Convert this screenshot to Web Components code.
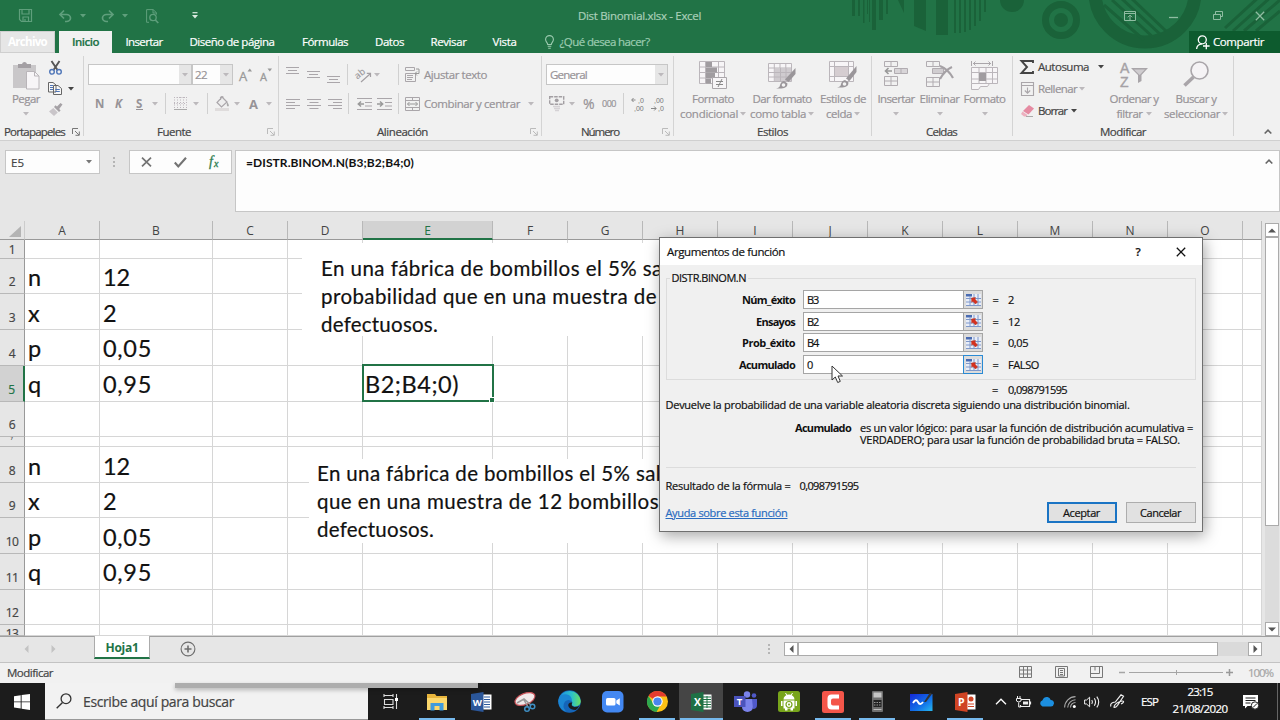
<!DOCTYPE html>
<html lang="es">
<head>
<meta charset="utf-8">
<title>Dist Binomial.xlsx - Excel</title>
<style>
  body {
    margin: 0;
    overflow: hidden;
    font-family: "Open Sans", "Noto Sans", sans-serif;
    font-size: 11.5px;
    color: #444;
  }
</style>
</head>
<body>
<excel-app></excel-app>

<script>
"use strict";

(() => {
  // name: [width, height, svg markup]
  const icons = {
    arrow: [6, 4, `<path d="M0 0h6L3 3.6z" fill="currentColor"/>`],
    arrowOff: [6, 4, `<path d="M0 0h6L3 3.6z" fill="#bcb9bc"/>`],
    sep: [1, 21, `<path d="M.5 0v21" stroke="#d0d0d0"/>`],
    launcher: [8, 8, `<path d="M.5 6V.5H6M3 3l4 4M7.3 3.5v3.8H3.5" fill="none" stroke="currentColor"/>`],
    chevronUp: [8, 5, `<path d="M.7 4.5L4 1.2l3.3 3.3" fill="none" stroke="currentColor" stroke-width="1.6"/>`],
    save: [13, 13, `<path d="M.5.5h12v12H2.5l-2-2zM3 .5v4.500h7V.5M4 12.500V8h5.500v4.500M6 10v2" fill="none" stroke="currentColor" stroke-width="1.200"/>`],
    undo: [13, 12, `<path d="M5 .5L1 4.500l4 4M1.500 4.500h6a4 3.500 0 0 1 0 7H6" fill="none" stroke="currentColor" stroke-width="1.700"/>`],
    redo: [13, 12, `<path d="M8 .5l4 4-4 4M11.500 4.500h-6a4 3.500 0 0 0 0 7H7" fill="none" stroke="currentColor" stroke-width="1.700"/>`],
    preview: [13, 14, `<path d="M3 13.300H.6V.6h6.500l3.300 3v2M7 .6V4h3.400" fill="none" stroke="currentColor"/><circle cx="7" cy="8.500" r="3.200" fill="none" stroke="currentColor" stroke-width="1.300"/><path d="M9.300 11l3 3" stroke="currentColor" stroke-width="1.700"/>`],
    customize: [6, 7, `<path d="M.5.7h5" stroke="currentColor" stroke-width="1.200"/><path d="M0 3h6L3 6.500z" fill="currentColor"/>`],
    display: [12, 10, `<path d="M.5.500h11v9H.5zM.5 2.500h11M6 9V4.300M3.800 6.300L6 4.100l2.200 2.200" fill="none" stroke="currentColor"/>`],
    minimize: [9, 10, `<path d="M0 6.500h9" stroke="currentColor" stroke-width="1.300"/>`],
    restore: [10, 9, `<path d="M.5 3.500h7v5h-7zM2.500 3V.5h7v5H8" fill="none" stroke="currentColor"/>`],
    close: [10, 10, `<path d="M.8.8l8.400 8.400M9.200.8L.8 9.200" stroke="currentColor" stroke-width="1.300"/>`],
    bulb: [9, 14, `<path d="M2.700 9.500C2.700 7.500.6 7 .6 4.500a3.900 3.900 0 0 1 7.800 0c0 2.500-2.100 3-2.100 5zM2.700 11.300h3.600M3.200 13.200h2.600" fill="none" stroke="currentColor" stroke-width="1.100"/>`],
    share: [14, 15, `<circle cx="6.300" cy="4.800" r="4" fill="none" stroke="currentColor" stroke-width="1.300"/><path d="M.6 14C.8 10.500 3 9 6 8.800M10.300 7.700v6.600M7 11h6.600" fill="none" stroke="currentColor" stroke-width="1.300"/>`],
    paste: [27, 29, `<path d="M0 4h23v23H0z" fill="#c9c7c9"/><path d="M5 3h4a2.600 2.600 0 0 1 5 0h4v4H5z" fill="#a39fa3"/><path d="M13.500 10.500h8l4.500 4.500v13H13.500z" fill="#f7f5f7" stroke="#b9b5b9"/><path d="M21.500 10.500V15H26" fill="none" stroke="#b9b5b9"/>`],
    cut: [13, 14, `<path d="M2.500 0l6 9M10.500 0l-6 9" stroke="#555" stroke-width="1.900"/><circle cx="3" cy="10.800" r="2.300" fill="none" stroke="#4f76b8" stroke-width="1.400"/><circle cx="10" cy="10.800" r="2.300" fill="none" stroke="#4f76b8" stroke-width="1.400"/>`],
    copy: [14, 13, `<path d="M.5.500H5L8 3v7H.5zM5.500 3.500H10l3.500 3v6h-8z" fill="#f7f7f7" stroke="#666"/><path d="M2 3.500h3M2 5.500h3M2 7.500h3M7.300 7.500h4.500M7.300 9.500h4.500" stroke="#4f76b8"/>`],
    brush: [14, 13, `<path d="M13.500 1.500L11.500 0 8 3.500 6.500 2.300 5 4l5 5 1.600-1.500L10.200 6z" fill="#a5a1a5"/><path d="M4.300 5l4.500 4.600L5 13 0 8.500z" fill="#c9c5c9"/>`],
    grow: [13, 14, `<text x="0" y="13" font-size="13" fill="#999" stroke="#999" stroke-width=".3">A</text><path d="M8.500 3.500h4.500L10.800.5z" fill="#999"/>`],
    shrink: [12, 14, `<text x="0" y="13" font-size="11" fill="#999" stroke="#999" stroke-width=".3">A</text><path d="M7.500.5H12L9.800 3.500z" fill="#999"/>`],
    borders: [13, 13, `<path d="M.5 0v12M3.500 0v12M6.500 0v12M9.500 0v12M12.500 0v12M0 .5h12M0 6.500h12" stroke="#bdb6bd" stroke-dasharray="1 1.500"/><path d="M0 12.500h13" stroke="#aaa"/>`],
    bucket: [15, 15, `<path d="M7 1l5 5-5.500 5L2 6.500zM5.500 4V1.500q1.500-2 3 0" fill="#eee" stroke="#aaa6aa" stroke-width="1.200"/><path d="M12 6q3 3.500 1.200 4.500-2 0-1.200-4.500" fill="#aaa"/><path d="M0 12h14v3H0z" fill="#dfdcdc"/>`],
    alignTop: [13, 18, `<path d="M0 1.500h13M2 4.500h9M0 7.500h13" stroke="#aaa6aa"/>`],
    alignMid: [13, 18, `<path d="M0 5.500h13M2 8.500h9M0 11.500h13" stroke="#aaa6aa"/>`],
    alignBottom: [13, 18, `<path d="M0 10.500h13M2 13.500h9M0 16.500h13" stroke="#aaa6aa"/>`],
    alignLeft: [14, 12, `<path d="M0 1.500h14M0 4.500h9M0 7.500h14M0 10.500h9" stroke="#aaa6aa"/>`],
    alignCenter: [14, 12, `<path d="M0 1.500h14M2.500 4.500h9M0 7.500h14M2.500 10.500h9" stroke="#aaa6aa"/>`],
    alignRight: [14, 12, `<path d="M0 1.500h14M5 4.500h9M0 7.500h14M5 10.500h9" stroke="#aaa6aa"/>`],
    orient: [16, 16, `<text x="0" y="9" font-size="9.500" font-weight="600" fill="#a39fa3" transform="rotate(-38 6 9)">ab</text><path d="M5 15l9-8M10.800 6.300h3.700V10" fill="none" stroke="#a39fa3" stroke-width="1.200"/>`],
    outdent: [15, 12, `<path d="M0 .5h15M0 11.500h15M8 4.500h7M8 8h7" stroke="#aaa6aa"/><path d="M7 6H1.500M4 3.500L1.300 6 4 8.500" fill="none" stroke="#999" stroke-width="1.500"/>`],
    indent: [15, 12, `<path d="M0 .5h15M0 11.500h15M8 4.500h7M8 8h7" stroke="#aaa6aa"/><path d="M0 6h5.500M3 3.500L5.700 6 3 8.500" fill="none" stroke="#999" stroke-width="1.500"/>`],
    wrap: [15, 15, `<path d="M.5.500h9v3h-9zM.5 6.500h10v8h-10zM2 8.500h6M2 10.500h6M2 12.500h5" fill="none" stroke="#aaa6aa"/><path d="M11 2h3v4.500h-4M12 4.500l-2 2 2 2" fill="none" stroke="#999"/>`],
    merge: [15, 14, `<path d="M.5.500h14v13H.5zM.5 3.500h14M.5 10.500h14M7.500 0v3M7.500 11v3" fill="none" stroke="#aaa6aa"/><path d="M2.500 7h10M4.500 5l-2 2 2 2M10.500 5l2 2-2 2" fill="none" stroke="#999"/>`],
    money: [16, 15, `<path d="M.7.700h14v7.500H.7z" fill="none" stroke="#a39fa3" stroke-width="1.400" stroke-dasharray="3.500 1"/><circle cx="7.700" cy="4.300" r="1.900" fill="#a39fa3"/><path d="M4 10.500h7M5 12.500h6M6 14.500h4" stroke="#d5d2d5" stroke-width="1.500"/>`],
    moreDec: [14, 14, `<path d="M4.500 3H.8M2.500 1L.7 3l1.800 2" fill="none" stroke="#888"/><text x="7" y="5.500" font-size="7" font-family="Liberation Sans" fill="#777">,0</text><text x="3" y="14" font-size="7" font-family="Liberation Sans" fill="#777">,00</text>`],
    lessDec: [14, 14, `<text x="3" y="5.500" font-size="7" font-family="Liberation Sans" fill="#777">,00</text><path d="M0 11.500h5M3.200 9.500l1.900 2-1.900 2" fill="none" stroke="#888"/><text x="7" y="14" font-size="7" font-family="Liberation Sans" fill="#777">,0</text>`],
    condFormat: [28, 28, `<path d="M.5.500h25v22H.5zM6.500 0v23M19.500 0v23M.5 6h25M.5 11.500h25M.5 17h25" fill="#f7f5f7" stroke="#bbb6bb"/><path d="M7 1h6v5H7zM7 6.500h11v5H7zM7 12h9v5H7zM7 17.500h5v5H7z" fill="#a09ca0"/><path d="M13.500 16.500h14v11h-14z" fill="#f7f5f7" stroke="#aaa6aa"/><path d="M17 20.500h7M17 23.500h7M23 18l-4 8" stroke="#888"/>`],
    tableFormat: [28, 28, `<path d="M.5 2.500h23v18H.5zM6.300 2.500v18M12 2.500v18M17.800 2.500v18M.5 7h23M.5 11.500h23M.5 16h23" fill="#f7f5f7" stroke="#bbb6bb"/><path d="M7 7h16v13H7z" fill="#cfcbcf"/><path d="M12.500 7v13M18 7v13M7 11.500h16M7 16h16" stroke="#bbb6bb"/><path d="M27.500 7v6L20.500 21l-3.500-2.500z" fill="#9a969a"/><path d="M16 20l3.500 2.500q0 4.500-6 5H8q4-1 4-3.500 1-3.500 4-4" fill="#9a969a"/><circle cx="15.500" cy="24" r="1.800" fill="#f3f3f3"/>`],
    cellStyles: [28, 28, `<path d="M.5.500h24v20H.5zM5.500 0v20M19.500 0v20M.5 5.500h24M.5 15.500h24" fill="#f7f5f7" stroke="#bbb6bb"/><path d="M6 6h13v9H6z" fill="#d5cdd1"/><path d="M27.500 5v6L20.500 20l-3.500-2.500z" fill="#9a969a"/><path d="M16 19l3.500 2.500q0 4.500-6 5H8q4-1 4-3.500 1-3.500 4-4" fill="#9a969a"/><circle cx="15.500" cy="23" r="1.800" fill="#f3f3f3"/>`],
    insertCells: [24, 26, `<path d="M.5.500h13v5H.5zM7 0v5M.5 15.500h13v9H.5zM7 15.500v9M.5 20h13" fill="none" stroke="#b1acb1"/><path d="M10.500 7.500h13v5h-13zM17 7.500v5" fill="#d8d5d8" stroke="#b1acb1"/><path d="M8 10H1.800M4.500 7L1.500 10l3 3" fill="none" stroke="#999" stroke-width="1.600"/>`],
    deleteCells: [28, 27, `<path d="M.5.500h13v5H.5zM7 0v5M.5 16.500h13v9H.5zM7 16.500v9M.5 21h13" fill="none" stroke="#b1acb1"/><path d="M6.500 7.500h11v5h-11z" fill="#d0cdd0" stroke="#b1acb1"/><path d="M14 5q8 3 13 12M26 6q-7 3-12 12" fill="none" stroke="#a5a1a5" stroke-width="2.200"/>`],
    formatCells: [28, 29, `<path d="M.5 0v5M21.500 0v5M2 2.500h18M4.500.5l-2 2 2 2M17.500.5l2 2-2 2" fill="none" stroke="#aaa6aa"/><path d="M.5 6.500h26v16H.5zM8 6v17M15 6v17M21.500 6v17M.5 11.500h26M.5 18h26M.5 22.500v6h7l2-3h7l2-3" fill="#f7f5f7" stroke="#bbb6bb"/><path d="M8 12h7v8H8z" fill="#a09ca0"/>`],
    sigma: [14, 14, `<path d="M13 3V1H1.500L7 7l-5.500 6H13v-2" fill="none" stroke="#444" stroke-width="1.900"/>`],
    fill: [13, 14, `<path d="M.5.500h12v13H.5zM.5 3.500h12M6.500 5.500v6M3.800 8.500l2.700 2.700 2.700-2.700" fill="none" stroke="#aaa6aa" stroke-width="1.100"/>`],
    eraser: [13, 12, `<path d="M8 0l5 3.500-5.500 6L2 6z" fill="#e58ba2"/><path d="M1.500 6.500l5 3.500-1 1.500H3L0 9z" fill="#edb0bf"/><path d="M5 11.500h7" stroke="#aaa"/>`],
    sort: [28, 26, `<text x="0" y="11.500" font-size="14" font-family="Liberation Sans" fill="#a5a1a5" stroke="#a5a1a5" stroke-width=".4">A</text><text x="0" y="25.500" font-size="14" font-family="Liberation Sans" fill="#a5a1a5" stroke="#a5a1a5" stroke-width=".4">Z</text><path d="M11 7h17l-6.500 7v6L18 22v-8z" fill="#a9a5a9"/><path d="M14 8.500h11L19.700 14z" fill="#cfcccf"/>`],
    find: [26, 26, `<circle cx="16.500" cy="9.500" r="8.500" fill="#f5f3f5" stroke="#a9a5a9" stroke-width="1.600"/><path d="M10.500 16L1.500 24.500" stroke="#a9a5a9" stroke-width="3.600"/>`],
    dots: [3, 13, `<path d="M0 1h2v2H0zM0 5h2v2H0zM0 9h2v2H0z" fill="#b5b5b5"/>`],
    check: [13, 11, `<path d="M.8 5.500l3.500 4L12 .8" fill="none" stroke="#737373" stroke-width="2.100"/>`],
    cancel: [11, 10, `<path d="M1 .7l9 8.600M10 .7L1 9.300" stroke="#737373" stroke-width="1.700"/>`],
    fx: [13, 15, `<text x="1" y="11" font-size="14" font-style="italic" font-family="Liberation Serif" fill="#2f7d52" stroke="#2f7d52" stroke-width=".3">f</text><text x="6" y="11.500" font-size="10" font-style="italic" font-family="Liberation Serif" fill="#2f7d52" stroke="#2f7d52" stroke-width=".3">x</text>`],
    corner: [12, 12, `<path d="M12 0v11H0z" fill="#b4b4b4"/>`],
    left: [5, 8, `<path d="M4.500 0v8L.5 4z" fill="currentColor"/>`],
    right: [5, 8, `<path d="M.5 0v8l4-4z" fill="currentColor"/>`],
    up: [8, 5, `<path d="M0 4.500h8L4 .5z" fill="currentColor"/>`],
    down: [8, 5, `<path d="M0 .5h8L4 4.500z" fill="currentColor"/>`],
    add: [16, 16, `<circle cx="8" cy="8" r="6.900" fill="none" stroke="#6e6e6e" stroke-width="1.100"/><path d="M8 4.500v7M4.500 8h7" stroke="#6e6e6e" stroke-width="1.600"/>`],
    viewNormal: [13, 12, `<path d="M.5.500h12v11H.5zM4.500 0v12M8.500 0v12M.5 4h12M.5 8h12" fill="none" stroke="#777"/>`],
    viewPage: [13, 12, `<path d="M.5.500h12v11H.5zM3.500 2.500h6v7.500h-6zM5 4.500h3M5 6.500h3M5 8.500h3" fill="none" stroke="#777"/>`],
    viewBreak: [13, 12, `<path d="M.5.500h12v11H.5zM.5 7.500h9v-7M5 .5v4" fill="none" stroke="#777"/>`],
    zoomTrack: [94, 9, `<path d="M0 4.500h94M47.500 2v5" stroke="#a5a5a5"/>`],
    minus: [6, 9, `<path d="M0 4.500h6" stroke="#a5a5a5" stroke-width="1.500"/>`],
    plus: [7, 9, `<path d="M0 4.500h7M3.500 1v7" stroke="#999" stroke-width="1.500"/>`],
    refedit: [15, 12, `<path d="M0 0h15v12H0z" fill="#e8edf8"/><path d="M0 0h6v2.500H0z" fill="#4a6cb3"/><path d="M0 4.500h15M0 8h15M4 2v10M8 0v12M12 0v12M0 11.500h15" stroke="#7e98ca"/><path d="M5.500 4l4-.5-.6 1.500L11.500 8l-2 2-2.700-2.700-1 1z" fill="#d6301f" stroke="#b8331f" stroke-width=".5"/>`],
    cursor: [13, 20, `<path d="M1 1v14l3.300-3 2.400 5.500 2.600-1.100L7 11h4.500z" fill="#fff" stroke="#333"/>`],
    windows: [16, 16, `<path d="M0 2.200l6.700-.9v6.100H0zM7.600 1.100L16 0v7.400H7.600zM0 8.300h6.700v6.100L0 13.500zM7.600 8.300H16V16l-8.400-1.200z" fill="#fff"/>`],
    search: [16, 16, `<circle cx="10" cy="5.700" r="4.900" fill="none" stroke="#333" stroke-width="1.300"/><path d="M6.500 9.500L.7 15.300" stroke="#333" stroke-width="1.400"/>`],
    taskview: [16, 15, `<path d="M1 1.500h9M1 0v3M10 0v3M1.500 5.500h8.500v5H1.500zM1 13.500h9M1 12v3M10 12v3M13.500 0v15" fill="none" stroke="#ddd" stroke-width="1.100"/><path d="M12 4h3v3h-3z" fill="#fff"/>`],
    folder: [21, 18, `<path d="M0 1h8l1.500 2H20v13H0z" fill="#e8b53c"/><path d="M0 5h20v12H0z" fill="#fbd76c"/><path d="M3.500 10h13v7.500h-4V13h-5v4.500h-4z" fill="#3f9bdc"/>`],
    word: [21, 20, `<path d="M9 2.500h11.500v15H9z" fill="#fff"/><path d="M13 5h6M13 7.500h6M13 10h6M13 12.500h6M13 15h6" stroke="#2b579a"/><path d="M0 2l12.500-2v20L0 18z" fill="#2b579a"/><text x="1.700" y="13.700" font-size="9.500" font-weight="bold" fill="#fff">W</text>`],
    snip: [22, 20, `<ellipse cx="11" cy="7" rx="10.500" ry="5.500" transform="rotate(-22 11 7)" fill="#f0eaea" stroke="#c9545a" stroke-width="1.200"/><path d="M3 11l7-4 7 6M10 8l4 7" stroke="#999" stroke-width="1.500" fill="none"/><circle cx="13" cy="17" r="2.300" fill="none" stroke="#3f8fc4" stroke-width="1.500"/><circle cx="18.500" cy="14.500" r="2.300" fill="none" stroke="#3f8fc4" stroke-width="1.500"/>`],
    edge: [23, 23, `<defs><linearGradient id="e1" x1="0" x2="1"><stop stop-color="#1c8fe0"/><stop offset=".6" stop-color="#2cc0c9"/><stop offset="1" stop-color="#6be05e"/></linearGradient></defs><circle cx="11.500" cy="11.500" r="11.300" fill="#1565b8"/><path d="M.5 10A11.300 11.300 0 0 1 22.800 11q0 5-6 5.500-4-.5-2.500-3.500 0-4-4.300-4.500T.5 12z" fill="url(#e1)"/><path d="M14.300 12.500q-2 3.500 2 4.500 3.500 0 5-1.500-1 3-3.500 4.500-6 0-7.500-4-.5-4 4-3.500" fill="#1c1c1c"/><path d="M1 7.500q3-4 8-3 5 1 5 7-3.500-3-7 0-3.500 5 1 10Q2 20 .5 13z" fill="#1b86d2"/>`],
    zoom: [22, 22, `<rect width="21.500" height="21.500" rx="5" fill="#4388f2"/><rect x="4" y="7" width="9.500" height="7.500" rx="1.500" fill="#fff"/><path d="M14.300 9.500l3.500-2.300v7.300l-3.500-2.300z" fill="#fff"/>`],
    chrome: [21, 21, `<circle cx="10.500" cy="10.500" r="10.500" fill="#fbc116"/><path d="M10.500 10.500L1.500 5A10.500 10.500 0 0 1 19.700 5.500h-9.200z" fill="#e33b2e"/><path d="M1.500 5a10.500 10.500 0 0 0 8 16l4.500-8-8-1z" fill="#2da94f"/><circle cx="10.500" cy="10.500" r="5.200" fill="#fff"/><circle cx="10.500" cy="10.500" r="4.100" fill="#4a86ee"/>`],
    excel: [21, 20, `<path d="M10 2.500h10.500v15H10z" fill="#fff"/><path d="M12 5h8M12 7.500h8M12 10h8M12 12.500h8M12 15h8M16 4v12" stroke="#1e7145"/><path d="M0 2l12.500-2v20L0 18z" fill="#1e7145"/><text x="3" y="14" font-size="10.500" font-weight="bold" fill="#fff">X</text>`],
    teams: [23, 21, `<circle cx="13" cy="3.500" r="3.200" fill="#7b83eb"/><circle cx="20" cy="4.500" r="2.300" fill="#5059c9"/><path d="M8 8h11v8a5.500 5 0 0 1-11 0z" fill="#7b83eb"/><path d="M18 8h5v6q0 4-4 4z" fill="#5059c9"/><path d="M0 5h11.500v11H0z" fill="#4b53bc"/><text x="2.700" y="14" font-size="9.500" font-weight="bold" fill="#fff">T</text>`],
    android: [22, 21, `<rect width="22" height="21" rx="2.500" fill="#78a51b"/><path d="M5.500 8.500a5.500 5 0 0 1 11 0zM5.500 9.500h11v8h-11zM3 10h1.500v5H3zM17.500 10H19v5h-1.500zM7 17h2.500v2.500H7zM12.500 17H15v2.500h-2.500z" fill="#fff"/><path d="M7.500 2l1.300 2.200M14.500 2l-1.300 2.200" stroke="#fff"/><circle cx="11" cy="13.500" r="3" fill="none" stroke="#78a51b" stroke-width="1.200"/><circle cx="11" cy="13.500" r="1" fill="#78a51b"/>`],
    camtasia: [22, 22, `<rect width="22" height="22" rx="2.500" fill="#f4564a"/><path d="M17 3.500H9.500q-4 0-4 4v7q0 4 4 4H17v-4h-6q-2 0-2-2v-3q0-2 2-2h6z" fill="#fff"/>`],
    calc: [11, 21, `<rect width="11" height="21" rx="1" fill="#6f6f6f"/><path d="M1.500 1.500h8v5h-8z" fill="#c5c5c5"/><path d="M1.500 9h8v7h-8z" fill="#222"/><path d="M2 11.500h7M2 14h7" stroke="#999" stroke-dasharray="1.500 1"/><path d="M1.500 18.500h8" stroke="#bbb"/>`],
    whiteboard: [23, 19, `<defs><linearGradient id="w1" x1="0" x2="1" y2="1"><stop stop-color="#1427d8"/><stop offset=".6" stop-color="#1272e8"/><stop offset="1" stop-color="#27b9ef"/></linearGradient></defs><path d="M0 2h22.500v17H0z" fill="url(#w1)"/><path d="M3 11q3-5 5-1t5 0" fill="none" stroke="#fff" stroke-width="1.900"/><path d="M14 10L20 .5 22 2l-6 8z" fill="#333"/>`],
    powerpoint: [21, 20, `<path d="M10 2.500h10.500v15H10z" fill="#fff"/><circle cx="16" cy="7" r="2.500" fill="#d04424"/><path d="M13 12h6M13 14.500h6" stroke="#d04424" stroke-width="1.200"/><path d="M0 2l12.500-2v20L0 18z" fill="#d04424"/><text x="3" y="14" font-size="10.500" font-weight="bold" fill="#fff">P</text>`],
    trayUp: [12, 7, `<path d="M1 6.200L6 1.200l5 5" fill="none" stroke="#fff" stroke-width="1.300"/>`],
    battery: [16, 12, `<path d="M5 3.500h8.500v7H4.500V9M14.500 5.500v3" fill="none" stroke="#eee" stroke-width="1.200"/><path d="M7 5.500h5v3H7z" fill="#eee"/><path d="M1.500 0v2.500M4 0v2.500M.5 2.500h4.500v2.500q-2.200 2-4.500 0zM2.700 6.500v4.500h2" fill="none" stroke="#eee"/>`],
    cloud: [15, 11, `<path d="M3.500 10.500a3.300 3.300 0 0 1 0-6.300Q5 .5 8.500 1q2.500.5 3.200 3 3.300.3 3.300 3.500-.3 2.700-3 3z" fill="#1c8fe0"/>`],
    wifi: [12, 12, `<path d="M.6 11.500A11 11 0 0 1 11.500.6M3.700 11.500a8 8 0 0 1 7.800-7.700M6.500 11.500a5 5 0 0 1 5-5" fill="none" stroke="#aaa" stroke-width="1.100"/><circle cx="10.300" cy="10.500" r="1.500" fill="#fff"/>`],
    sound: [16, 12, `<path d="M.6 4h2l3-2.800v9.600l-3-2.800h-2z" fill="none" stroke="#eee"/><path d="M7.800 4q1.300 2 0 4M10.300 2.300q2.500 3.700 0 7.400M12.800.6q3.800 5.400 0 10.800" fill="none" stroke="#eee" stroke-width="1.100"/>`],
    pen: [16, 15, `<path d="M.8 12.500q-1-4 4.500-4.500L11 .8l2.500 1.500-6 9q-2 2.500-3.500 2 0-3 5-5.300 4-1.500 4.500-.5t-2.500 2.500" fill="none" stroke="#eee" stroke-width="1.200"/>`],
    action: [16, 16, `<path d="M0 1h15v11H4.500L2 14.500V12H0z" fill="#fff"/><path d="M2.500 4h10M2.500 6.500h10M2.500 9h5" stroke="#1c1c1c"/><circle cx="12" cy="11.500" r="3.700" fill="#fff" stroke="#1c1c1c"/><path d="M10 13.500l4-4" stroke="#1c1c1c"/>`]
  };

  customElements.define("excel-app", class extends HTMLElement {
    constructor() {
      super();

      this.attachShadow({mode: "open"}).innerHTML = `
        <style>
          :host {
            display: grid;
            grid-template-rows: 31px 22px 88px 80px 415px 26px 21px 37px;
            width: 1280px;
            height: 720px;
            position: relative;
            overflow: hidden;
            background: #e6e6e6;
          }

          function-dialog {
            position: absolute;
            left: 659px;
            top: 237px;
          }

          #pointer {
            position: absolute;
            left: 831px;
            top: 365px;
          }
        </style>

        <title-bar></title-bar>
        <tab-bar></tab-bar>
        <excel-ribbon></excel-ribbon>
        <formula-bar></formula-bar>
        <work-sheet></work-sheet>
        <sheet-tabs></sheet-tabs>
        <status-bar></status-bar>
        <task-bar></task-bar>
        <function-dialog></function-dialog>
        <ui-icon id="pointer" name="cursor"></ui-icon>
      `;
    }
  });

  customElements.define("title-bar", class extends HTMLElement {
    constructor() {
      super();

      this.attachShadow({mode: "open"}).innerHTML = `
        <style>
          :host {
            display: flex;
            align-items: center;
            height: 31px;
            background: #217346;
            position: relative;
            z-index: 1;
            color: #5f9f7c;
          }

          /* runs down behind the tabs, but stops at the share button */
          #art {
            position: absolute;
            left: 840px;
            top: 0;
            clip-path: polygon(0 0, 440px 0, 440px 31px, 349px 31px, 349px 53px, 0 53px);
          }

          ui-icon, ui-text {
            position: relative;
          }

          ui-text {
            color: #a9cfb8;
          }
        </style>

        <svg id="art" width="440" height="53" fill="#1a6239">
          <path d="M12 0h3v16h-3zM18 0h2v16h-2zM23 0h1.500v23H23zM27 0h1v14h-1zM29 0h1v22h-1zM32 0h4v30h-4zM39 0h4v20h-4zM46 0h2v14h-2zM58 0h6v13zM74 0h12v31l-12-5zM96 0h12v35H96zM114 0h2v33h-2zM119 0h2v33h-2zM124 0h2v32h-2zM129 0h2v30h-2zM134 0h2v26h-2zM139 0h2v21h-2zM144 0h2v12h-2z"/>
          <circle cx="172" cy="0" r="12"/>
          <circle cx="221" cy="20" r="15.500" fill="none" stroke="#1a6239" stroke-width="7"/>
          <circle cx="221" cy="20" r="7"/>
          <circle cx="305" cy="-8" r="50" fill="none" stroke="#1a6239" stroke-width="13"/>
          <path d="M264 5l40 35M272 0l42 38M281 -2l40 37M290 -3l36 34M385 28L420 -4M393 31L432 -4M404 31L440 0M416 31l24-20" stroke="#1a6239" stroke-width="3" fill="none"/>
        </svg>
        <ui-icon name="save" gap="19"></ui-icon>
        <ui-icon name="undo" gap="27"></ui-icon>
        <ui-icon name="arrow" gap="8"></ui-icon>
        <ui-icon name="redo" gap="15"></ui-icon>
        <ui-icon name="arrow" gap="8"></ui-icon>
        <ui-icon name="preview" gap="18"></ui-icon>
        <ui-icon name="customize" gap="33" style="color: #d9ebe0"></ui-icon>
        <ui-text gap="380" w="123">Dist Binomial.xlsx - Excel</ui-text>
        <ui-icon name="display" gap="423" style="color: #8fbda2"></ui-icon>
        <ui-icon name="minimize" gap="33" style="color: #8fbda2"></ui-icon>
        <ui-icon name="restore" gap="35" style="color: #8fbda2"></ui-icon>
        <ui-icon name="close" gap="32" style="color: #8fbda2"></ui-icon>
      `;
    }
  });

  customElements.define("tab-bar", class extends HTMLElement {
    constructor() {
      super();

      this.attachShadow({mode: "open"}).innerHTML = `
        <style>
          :host {
            display: flex;
            align-items: center;
            height: 22px;
            background: #217346;
            color: #fff;
          }

          div {
            display: flex;
            align-items: center;
            justify-content: center;
            height: 22px;
          }

          ui-text {
            padding-bottom: 2px;
          }

          #file {
            width: 55px;
            background: #e6e6e6;
            box-shadow: inset 0 0 0 1px #cfcfcf;
            color: #fff;
          }

          #active {
            width: 53px;
            margin-left: 4px;
            background: #f1f1f1;
            color: #217346;
          }

          #tell {
            color: #9ccbb0;
          }

          #share {
            width: 91px;
            margin-left: 539px;
            background: #0d5b2e;
            justify-content: flex-start;
          }
        </style>

        <div id="file"><ui-text w="39" bold>Archivo</ui-text></div>
        <div id="active"><ui-text w="27" semi>Inicio</ui-text></div>
        <ui-text gap="13.500" w="37">Insertar</ui-text>
        <ui-text gap="27" w="85">Diseño de página</ui-text>
        <ui-text gap="27.500" w="46">Fórmulas</ui-text>
        <ui-text gap="27" w="29">Datos</ui-text>
        <ui-text gap="26.500" w="36">Revisar</ui-text>
        <ui-text gap="26" w="24">Vista</ui-text>
        <div id="tell">
          <ui-icon name="bulb" gap="28"></ui-icon>
          <ui-text gap="6" w="90">¿Qué desea hacer?</ui-text>
        </div>
        <div id="share">
          <ui-icon name="share" gap="7"></ui-icon>
          <ui-text gap="3.500" w="51">Compartir</ui-text>
        </div>
      `;
    }
  });

  customElements.define("excel-ribbon", class extends HTMLElement {
    constructor() {
      super();

      this.attachShadow({mode: "open"}).innerHTML = `
        <style>
          :host {
            display: flex;
            box-sizing: border-box;
            height: 88px;
            padding-top: 3px;
            background: #f1f1f1;
            border-bottom: 1px solid #d0d0d0;
            color: #979397;
          }

          .row {
            display: flex;
            align-items: center;
            height: 21px;
          }

          .stack {
            display: flex;
            flex-direction: column;
          }

          .box {
            display: flex;
            align-items: center;
            box-sizing: border-box;
            height: 21px;
            background: #fdfdfd;
            border: 1px solid #c6c6c6;
          }

          .drop {
            display: flex;
            align-items: center;
            justify-content: center;
            margin-left: auto;
            width: 12px;
            height: 19px;
            background: #e6e6e6;
          }

          .dark {
            color: #444;
          }

          #collapse {
            margin: 73px 0 0 auto;
            padding-right: 8px;
            color: #666;
          }
        </style>

        <ribbon-group width="84" label="Portapapeles" gap="4" labelwidth="61" launcher="#777">
          <big-button width="40" gap="6" icon="paste" line1="Pegar" w1="28" arrow="2"></big-button>
          <div class="stack">
            <div class="row" style="margin-top: 1px"><ui-icon name="cut" gap="3"></ui-icon></div>
            <div class="row dark"><ui-icon name="copy" gap="2"></ui-icon><ui-icon name="arrow" gap="6"></ui-icon></div>
            <div class="row"><ui-icon name="brush" gap="3"></ui-icon></div>
          </div>
        </ribbon-group>

        <ribbon-group width="195" label="Fuente" gap="73" labelwidth="34" launcher="#bbb">
          <div class="stack">
            <div class="row" style="margin-top: 8px">
              <div class="box" style="margin-left: 4px; width: 104px"><div class="drop"><ui-icon name="arrowOff"></ui-icon></div></div>
              <div class="box" style="width: 41px"><ui-text gap="2" w="12">22</ui-text><div class="drop"><ui-icon name="arrowOff"></ui-icon></div></div>
              <ui-icon name="grow" gap="6"></ui-icon>
              <ui-icon name="shrink" gap="8"></ui-icon>
            </div>
            <div class="row" style="margin-top: 8px">
              <ui-text gap="11" w="8" bold>N</ui-text>
              <ui-text gap="12" w="8" bold style="font-style: italic">K</ui-text>
              <ui-text gap="13" w="7" bold style="text-decoration: underline">S</ui-text>
              <ui-icon name="arrowOff" gap="9"></ui-icon>
              <ui-icon name="sep" gap="7"></ui-icon>
              <ui-icon name="borders" gap="8"></ui-icon>
              <ui-icon name="arrowOff" gap="6"></ui-icon>
              <ui-icon name="sep" gap="8"></ui-icon>
              <ui-icon name="bucket" gap="7"></ui-icon>
              <ui-icon name="arrowOff" gap="4"></ui-icon>
              <ui-text gap="9" w="9" bold style="font-size: 13px">A</ui-text>
              <ui-icon name="arrowOff" gap="8"></ui-icon>
            </div>
          </div>
        </ribbon-group>

        <ribbon-group width="263" label="Alineación" gap="98" labelwidth="51" launcher="#bbb">
          <div class="stack">
            <div class="row" style="margin-top: 8px">
              <ui-icon name="alignTop" gap="7"></ui-icon>
              <ui-icon name="alignMid" gap="8"></ui-icon>
              <ui-icon name="alignBottom" gap="7"></ui-icon>
              <ui-icon name="sep" gap="7"></ui-icon>
              <ui-icon name="orient" gap="8"></ui-icon>
              <ui-icon name="arrowOff" gap="2"></ui-icon>
              <ui-icon name="sep" gap="18"></ui-icon>
              <ui-icon name="wrap" gap="6"></ui-icon>
              <ui-text gap="4" w="63">Ajustar texto</ui-text>
            </div>
            <div class="row" style="margin-top: 8px">
              <ui-icon name="alignLeft" gap="7"></ui-icon>
              <ui-icon name="alignCenter" gap="7"></ui-icon>
              <ui-icon name="alignRight" gap="7"></ui-icon>
              <ui-icon name="sep" gap="6"></ui-icon>
              <ui-icon name="outdent" gap="8"></ui-icon>
              <ui-icon name="indent" gap="5"></ui-icon>
              <ui-icon name="sep" gap="6"></ui-icon>
              <ui-icon name="merge" gap="6"></ui-icon>
              <ui-text gap="4" w="96">Combinar y centrar</ui-text>
              <ui-icon name="arrowOff" gap="8"></ui-icon>
            </div>
          </div>
        </ribbon-group>

        <ribbon-group width="132" label="Número" gap="39" labelwidth="38" launcher="#bbb">
          <div class="stack">
            <div class="row" style="margin-top: 8px">
              <div class="box" style="margin-left: 4px; width: 122px"><ui-text gap="3" w="37">General</ui-text><div class="drop"><ui-icon name="arrowOff"></ui-icon></div></div>
            </div>
            <div class="row" style="margin-top: 8px">
              <ui-icon name="money" gap="7"></ui-icon>
              <ui-icon name="arrowOff" gap="4"></ui-icon>
              <ui-text gap="8" w="12" style="font-size: 14px">%</ui-text>
              <ui-text gap="7" w="14" style="font-size: 9px">000</ui-text>
              <ui-icon name="sep" gap="7"></ui-icon>
              <ui-icon name="moreDec" gap="7"></ui-icon>
              <ui-icon name="lessDec" gap="6"></ui-icon>
            </div>
          </div>
        </ribbon-group>

        <ribbon-group width="198" label="Estilos" gap="83" labelwidth="31">
          <big-button width="72" gap="3" icon="condFormat" line1="Formato" w1="42" line2="condicional" w2="58" arrow="2"></big-button>
          <big-button width="66" icon="tableFormat" line1="Dar formato" w1="59" line2="como tabla" w2="56" arrow="2"></big-button>
          <big-button width="56" icon="cellStyles" line1="Estilos de" w1="46" line2="celda" w2="26" arrow="2"></big-button>
        </ribbon-group>

        <ribbon-group width="141" label="Celdas" gap="54" labelwidth="31">
          <big-button width="42" gap="3" icon="insertCells" line1="Insertar" w1="37" arrow="2"></big-button>
          <big-button width="45" icon="deleteCells" line1="Eliminar" w1="40" arrow="2"></big-button>
          <big-button width="45" icon="formatCells" line1="Formato" w1="42" arrow="2"></big-button>
        </ribbon-group>

        <ribbon-group width="221" label="Modificar" gap="87" labelwidth="46">
          <div class="stack" style="width: 91px">
            <div class="row dark"><ui-icon name="sigma" gap="7"></ui-icon><ui-text gap="4" w="51">Autosuma</ui-text><ui-icon name="arrow" gap="9"></ui-icon></div>
            <div class="row" style="margin-top: 1px"><ui-icon name="fill" gap="8"></ui-icon><ui-text gap="4" w="39">Rellenar</ui-text><ui-icon name="arrowOff" gap="2"></ui-icon></div>
            <div class="row dark" style="margin-top: 1px"><ui-icon name="eraser" gap="8"></ui-icon><ui-text gap="4" w="29">Borrar</ui-text><ui-icon name="arrow" gap="4"></ui-icon></div>
          </div>
          <big-button width="60" icon="sort" line1="Ordenar y" w1="49" line2="filtrar" w2="26" arrow="3"></big-button>
          <big-button width="64" icon="find" line1="Buscar y" w1="41" line2="seleccionar" w2="56" arrow="2"></big-button>
        </ribbon-group>

        <ui-icon id="collapse" name="chevronUp"></ui-icon>
      `;
    }
  });

  customElements.define("ribbon-group", class extends HTMLElement {
    constructor() {
      super();

      this.attachShadow({mode: "open"}).innerHTML = `
        <style>
          :host {
            display: flex;
            flex-direction: column;
            flex: none;
            box-sizing: border-box;
            width: ${this.getAttribute("width")}px;
            height: 80px;
            border-right: 1px solid #d4d4d4;
          }

          #content {
            display: flex;
            height: 68px;
          }

          #footer {
            display: flex;
            align-items: center;
            height: 15px;
            margin-bottom: -3px;
            color: #444;
          }

          #launcher {
            margin-left: auto;
            padding-right: 3px;
            color: ${this.getAttribute("launcher")};
          }
        </style>

        <div id="content"><slot></slot></div>
        <div id="footer">
          <ui-text gap="${this.getAttribute("gap")}" w="${this.getAttribute("labelwidth")}">${this.getAttribute("label")}</ui-text>
          ${this.hasAttribute("launcher") ? `<ui-icon id="launcher" name="launcher"></ui-icon>` : ""}
        </div>
      `;
    }
  });

  customElements.define("big-button", class extends HTMLElement {
    constructor() {
      super();

      const get = name => this.getAttribute(name);
      const arrow = `<ui-icon name="arrowOff" gap="${get("line2") ? get("arrow") : 0}"></ui-icon>`;

      this.attachShadow({mode: "open"}).innerHTML = `
        <style>
          :host {
            display: flex;
            flex-direction: column;
            align-items: center;
            flex: none;
            width: ${get("width")}px;
            margin-left: ${get("gap") || 0}px;
            padding-top: 5px;
          }

          #icon {
            height: 30px;
          }

          .line {
            display: flex;
            align-items: center;
            height: 15px;
          }
        </style>

        <div id="icon"><ui-icon name="${get("icon")}"></ui-icon></div>
        <div class="line"><ui-text w="${get("w1")}">${get("line1")}</ui-text></div>
        <div class="line">${get("line2") ? `<ui-text w="${get("w2")}">${get("line2")}</ui-text>` : ""}${arrow}</div>
      `;
    }
  });

  customElements.define("formula-bar", class extends HTMLElement {
    constructor() {
      super();

      this.attachShadow({mode: "open"}).innerHTML = `
        <style>
          :host {
            display: flex;
            align-items: flex-start;
            box-sizing: border-box;
            height: 80px;
            padding-top: 9px;
            background: #e6e6e6;
          }

          .box {
            display: flex;
            align-items: center;
            box-sizing: border-box;
            height: 24px;
            background: #fdfdfd;
            border: 1px solid #c6c6c6;
          }

          #dots {
            margin: 6px 14px 0 13px;
          }

          #input {
            align-items: flex-start;
            width: 1045px;
            height: 62px;
            margin-left: 3px;
            padding-top: 4px;
            color: #111;
            font-family: Lato, sans-serif;
            font-size: 12px;
          }
        </style>

        <div class="box" style="margin-left: 5px; width: 95px">
          <ui-text gap="5" w="13">E5</ui-text>
          <ui-icon name="arrow" gap="62" style="color: #777"></ui-icon>
        </div>
        <ui-icon id="dots" name="dots"></ui-icon>
        <div class="box" style="margin-left: -1px; width: 103px">
          <ui-icon name="cancel" gap="11"></ui-icon>
          <ui-icon name="check" gap="22"></ui-icon>
          <ui-icon name="fx" gap="21"></ui-icon>
        </div>
        <div class="box" id="input">
          <ui-text gap="10" w="168" bold>=DISTR.BINOM.N(B3;B2;B4;0)</ui-text>
          <ui-icon name="chevronUp" gap="851" style="margin-top: 4px; color: #666"></ui-icon>
        </div>
      `;
    }
  });

  customElements.define("work-sheet", class extends HTMLElement {
    constructor() {
      super();

      const columns = [75, 113, 75, 75, 130, 75, 75, 75, 75, 75, 75, 75, 75, 75, 75, 19];
      const rows = [19, 35, 36, 36, 36, 35, 10, 36, 35, 36, 36, 35, 11];
      const values = {
        2: ["n", "12"], 3: ["x", "2"], 4: ["p", "0,05"], 5: ["q", "0,95"],
        8: ["n", "12"], 9: ["x", "2"], 10: ["p", "0,05"], 11: ["q", "0,95"]
      };
      const widths = {n: 13, x: 12, p: 14, q: 13, "12": 27, "2": 13, "0,05": 49, "0,95": 49};

      const letters = columns.map((w, i) => {
        const letter = i < 15 ? String.fromCharCode(65 + i) : "";
        return `<div class="column ${letter === "E" ? "current" : ""}">${letter}</div>`;
      }).join("");

      const body = rows.map((h, r) => {
        const n = r + 1;
        const cells = columns.map((w, c) => {
          const text = (values[n] || [])[c];
          if (n === 5 && c === 4) {
            return `<div class="cell" id="selected"><ui-text gap="2" w="94">B2;B4;0)</ui-text></div>`;
          }
          return `<div class="cell r${n}">${text ? `<ui-text gap="3" w="${widths[text]}">${text}</ui-text>` : ""}</div>`;
        }).join("");
        return `<div class="number n${n}"><ui-text w="${n > 9 ? 12.5 : n === 7 ? 3 : 6.5}">${n}</ui-text></div>${cells}`;
      }).join("");

      this.attachShadow({mode: "open"}).innerHTML = `
        <style>
          :host {
            display: flex;
            height: 415px;
            position: relative;
            background: #e6e6e6;
          }

          #grid {
            display: grid;
            grid-template-columns: 25px ${columns.map(w => w + "px").join(" ")};
            grid-template-rows: 19px ${rows.map(h => h + "px").join(" ")};
          }

          #corner, .column, .number {
            display: flex;
            justify-content: center;
            align-items: center;
            box-sizing: border-box;
            background: #e6e6e6;
            border-right: 1px solid #b8b8b8;
            border-bottom: 1px solid #b8b8b8;
            font-size: 12px;
          }

          #corner, .column {
            border-bottom-color: #999;
          }

          #corner {
            justify-content: flex-end;
            padding: 3px 3px 0 0;
            border-right-color: #ccc;
          }

          .column.current {
            padding-top: 1px;
            background: #d2d2d2;
            border-bottom: 2px solid #217346;
            color: #217346;
          }

          .number {
            align-items: flex-end;
            overflow: hidden;
            line-height: 17px;
            padding-bottom: 3px;
            border-right-color: #999;
          }

          .n1 {
            padding-bottom: 0;
          }

          .n5 {
            background: #d2d2d2;
            border-right: 2px solid #217346;
            color: #217346;
          }

          /* row 7 is squeezed, so its number shrinks to a speck */
          .n7 {
            align-items: flex-start;
            padding: 0;
            font-size: 4px;
            line-height: 4px;
          }

          .n13 {
            align-items: flex-start;
            padding: 0;
          }

          .cell {
            display: flex;
            align-items: flex-end;
            box-sizing: border-box;
            background: #fff;
            border-right: 1px solid #d6d6d6;
            border-bottom: 1px solid #d6d6d6;
            font-family: Lato, sans-serif;
            font-size: 23.5px;
            line-height: 31px;
            color: #111;
            min-height: 0;
          }

          .r4, .r5, .r11, #selected {
            padding-bottom: 1px;
          }

          #selected {
            position: relative;
          }

          #selected::before {
            content: "";
            position: absolute;
            inset: -2px -2px -1px -1px;
            border: 2px solid #217346;
          }

          #selected::after {
            content: "";
            position: absolute;
            right: -3px;
            bottom: -2px;
            width: 4px;
            height: 4px;
            background: #217346;
            border: 1px solid #fff;
          }

          .note {
            position: absolute;
            box-sizing: border-box;
            background: #fff;
            font-family: Lato, sans-serif;
            font-size: 20.5px;
            line-height: 28.2px;
            color: #111;
          }

          #scroll {
            display: flex;
            flex-direction: column;
            box-sizing: border-box;
            width: 14px;
            margin: 2px 0 0 3px;
            color: #555;
          }

          .button {
            display: flex;
            align-items: center;
            justify-content: center;
            box-sizing: border-box;
            height: 14px;
            background: #fff;
            border: 1px solid #ababab;
          }

          #thumb {
            box-sizing: border-box;
            height: 289px;
            background: #fff;
            border: 1px solid #ababab;
          }

          #track {
            flex: 1;
            background: #dcdcdc;
          }
        </style>

        <div id="grid">
          <div id="corner"><ui-icon name="corner"></ui-icon></div>
          ${letters}
          ${body}
        </div>

        <div class="note" style="left: 302px; top: 22px; width: 880px; height: 93px; padding: 10.500px 0 0 19px">
          <ui-text w="347">En una fábrica de bombillos el 5% sal</ui-text>
          <ui-text w="336">probabilidad que en una muestra de</ui-text>
          <ui-text w="117">defectuosos.</ui-text>
        </div>
        <div class="note" style="left: 309px; top: 238px; width: 880px; height: 84px; padding: 0 0 0 8px">
          <ui-text w="344">En una fábrica de bombillos el 5% sal</ui-text>
          <ui-text w="342">que en una muestra de 12 bombillos</ui-text>
          <ui-text w="117">defectuosos.</ui-text>
        </div>

        <div id="scroll">
          <div class="button"><ui-icon name="up"></ui-icon></div>
          <div id="thumb"></div>
          <div id="track"></div>
          <div class="button"><ui-icon name="down"></ui-icon></div>
        </div>
      `;
    }
  });

  customElements.define("sheet-tabs", class extends HTMLElement {
    constructor() {
      super();

      this.attachShadow({mode: "open"}).innerHTML = `
        <style>
          :host {
            display: flex;
            align-items: center;
            height: 26px;
            background: linear-gradient(#a0a0a0 1px, #e6e6e6 1px);
            color: #c3c3c3;
          }

          #tab {
            display: flex;
            align-items: center;
            justify-content: center;
            align-self: flex-start;
            box-sizing: border-box;
            width: 56px;
            height: 23px;
            margin-left: 38px;
            padding-top: 2px;
            background: #fff;
            border: solid #ababab;
            border-width: 0 1px;
            border-bottom: 2px solid #217346;
            color: #217346;
            font-size: 12px;
          }

          .box {
            box-sizing: border-box;
            display: flex;
            align-items: center;
            justify-content: center;
            width: 14px;
            height: 14px;
            background: #fff;
            border: 1px solid #ababab;
            color: #555;
          }

          #track {
            width: 31px;
            height: 14px;
            background: #dadada;
          }
        </style>

        <ui-icon name="left" gap="24"></ui-icon>
        <ui-icon name="right" gap="22"></ui-icon>
        <div id="tab"><ui-text w="33" bold>Hoja1</ui-text></div>
        <ui-icon name="add" gap="30"></ui-icon>
        <ui-icon name="dots" gap="572"></ui-icon>
        <div class="box" style="margin-left: 13px"><ui-icon name="left"></ui-icon></div>
        <div class="box" style="width: 420px"></div>
        <div id="track"></div>
        <div class="box" style="margin-left: -1px"><ui-icon name="right"></ui-icon></div>
      `;
    }
  });

  customElements.define("status-bar", class extends HTMLElement {
    constructor() {
      super();

      this.attachShadow({mode: "open"}).innerHTML = `
        <style>
          :host {
            display: flex;
            align-items: center;
            box-sizing: border-box;
            height: 21px;
            padding-bottom: 2px;
            background: #f1f1f1;
            border-top: 1px solid #c3c3c3;
          }

          #zoom {
            color: #a5a5a5;
          }
        </style>

        <ui-text gap="7" w="46">Modificar</ui-text>
        <ui-icon name="viewNormal" gap="966"></ui-icon>
        <ui-icon name="viewPage" gap="23"></ui-icon>
        <ui-icon name="viewBreak" gap="22"></ui-icon>
        <ui-icon name="minus" gap="16"></ui-icon>
        <ui-icon name="zoomTrack" gap="4"></ui-icon>
        <ui-icon name="plus" gap="3"></ui-icon>
        <ui-text id="zoom" gap="15" w="25">100%</ui-text>
      `;
    }
  });

  customElements.define("task-bar", class extends HTMLElement {
    constructor() {
      super();

      const apps = ["folder", "word", "snip", "edge", "zoom", "chrome", "excel", "teams", "android", "camtasia", "calc", "whiteboard", "powerpoint"];
      const open = ["folder", "chrome", "excel", "camtasia", "calc", "powerpoint"];

      this.attachShadow({mode: "open"}).innerHTML = `
        <style>
          :host {
            display: flex;
            align-items: center;
            height: 37px;
            background: #1c1c1c;
            color: #fff;
            position: relative;
          }

          #start {
            display: flex;
            align-items: center;
            width: 45px;
            height: 37px;
          }

          #search {
            display: flex;
            align-items: center;
            box-sizing: border-box;
            width: 323px;
            height: 37px;
            background: #f2f2f2;
            border-bottom: 1px solid #999;
            color: #444;
            font-size: 14px;
          }

          #strip {
            position: absolute;
            left: 175px;
            top: 0;
            width: 303px;
            height: 5px;
            background: #adadad;
            box-shadow: 0 2px 4px rgba(0, 0, 0, .25);
          }

          .app {
            display: flex;
            align-items: center;
            justify-content: center;
            box-sizing: border-box;
            width: 44px;
            height: 37px;
          }

          .open {
            background: linear-gradient(#76b9ed, #76b9ed) center bottom / 36px 2px no-repeat;
          }

          .excel {
            background: linear-gradient(#76b9ed, #76b9ed) center bottom / 43px 2px no-repeat, #454545;
          }

          #clock {
            width: 56px;
            margin-left: 14px;
            padding-bottom: 3px;
            display: flex;
            flex-direction: column;
            align-items: center;
            line-height: 17px;
          }

          #edge {
            width: 1px;
            height: 37px;
            margin-left: 18px;
            background: #666;
          }
        </style>

        <div id="start"><ui-icon name="windows" gap="14"></ui-icon></div>
        <div id="search">
          <ui-icon name="search" gap="11"></ui-icon>
          <ui-text gap="11" w="151">Escribe aquí para buscar</ui-text>
        </div>
        <ui-icon name="taskview" gap="15"></ui-icon>
        <div style="width: 16px"></div>
        ${apps.map(name => `<div class="app ${open.includes(name) ? "open" : ""} ${name}"><ui-icon name="${name}"></ui-icon></div>`).join("")}
        <ui-icon name="trayUp" gap="8"></ui-icon>
        <ui-icon name="battery" gap="9"></ui-icon>
        <ui-icon name="cloud" gap="7"></ui-icon>
        <ui-icon name="wifi" gap="10"></ui-icon>
        <ui-icon name="sound" gap="8"></ui-icon>
        <ui-icon name="pen" gap="10"></ui-icon>
        <ui-text gap="15" w="17">ESP</ui-text>
        <div id="clock">
          <ui-text w="25">23:15</ui-text>
          <ui-text w="55">21/08/2020</ui-text>
        </div>
        <ui-icon name="action" gap="15"></ui-icon>
        <div id="edge"></div>
        <div id="strip"></div>
      `;
    }
  });

  customElements.define("function-dialog", class extends HTMLElement {
    constructor() {
      super();

      this.attachShadow({mode: "open"}).innerHTML = `
        <style>
          :host {
            display: block;
            box-sizing: border-box;
            width: 544px;
            height: 295px;
            background: #f0f0f0;
            border: 1px solid #6f6f6f;
            box-shadow: 2px 4px 14px rgba(0, 0, 0, .35);
            color: #111;
            font-size: 11px;
          }

          #title {
            display: flex;
            align-items: center;
            height: 27px;
            background: #fff;
            font-size: 11.5px;
          }

          #args {
            box-sizing: border-box;
            height: 102px;
            margin: 13px 6px 0;
            border: 1px solid #dcdcdc;
          }

          #legend {
            display: flex;
            align-items: center;
            width: 78px;
            height: 15px;
            margin: -9px 0 4px 3px;
            background: #f0f0f0;
          }

          .row {
            display: flex;
            align-items: center;
            height: 16px;
          }

          #help {
            display: flex;
            box-sizing: border-box;
            height: 46px;
            margin: 11px 6px 0;
            border-bottom: 1px solid #dcdcdc;
            line-height: 12.4px;
          }

          #link {
            color: #2a6cc0;
            text-decoration: underline;
          }

          .button {
            display: flex;
            align-items: center;
            justify-content: center;
            box-sizing: border-box;
            width: 70px;
            height: 21px;
            margin-left: 9px;
            background: #e1e1e1;
            border: 1px solid #adadad;
          }

          #ok {
            margin-left: 259px;
            border: 2px solid #1a74c4;
          }
        </style>

        <div id="title">
          <ui-text gap="7" w="118">Argumentos de función</ui-text>
          <ui-text gap="350.500" w="6" semi>?</ui-text>
          <ui-icon name="close" gap="34"></ui-icon>
        </div>
        <div id="args">
          <div id="legend"><ui-text gap="1.500" w="74.500">DISTR.BINOM.N</ui-text></div>
          <argument-row label="Núm_éxito" lw="53" value="B3" vw="11" result="2" rw="6"></argument-row>
          <argument-row label="Ensayos" lw="39" value="B2" vw="11" result="12" rw="12"></argument-row>
          <argument-row label="Prob_éxito" lw="53" value="B4" vw="11" result="0,05" rw="20"></argument-row>
          <argument-row label="Acumulado" lw="56" value="0" vw="6" result="FALSO" rw="31" active></argument-row>
        </div>
        <div class="row" style="margin-top: 1px"><ui-text gap="332" w="7">=</ui-text><ui-text gap="9" w="59">0,098791595</ui-text></div>
        <div class="row" style="height: 14px"><ui-text gap="5.500" w="464">Devuelve la probabilidad de una variable aleatoria discreta siguiendo una distribución binomial.</ui-text></div>
        <div id="help">
          <ui-text gap="129" w="56" bold>Acumulado</ui-text>
          <div style="margin-left: 9px">
            <ui-text w="333">es un valor lógico: para usar la función de distribución acumulativa =</ui-text>
            <ui-text w="320">VERDADERO; para usar la función de probabilidad bruta = FALSO.</ui-text>
          </div>
        </div>
        <div class="row" style="margin-top: 9px"><ui-text gap="5.500" w="125">Resultado de la fórmula =</ui-text><ui-text gap="9" w="59">0,098791595</ui-text></div>
        <div class="row" style="margin-top: 9px; height: 21px">
          <ui-text id="link" gap="5.500" w="122">Ayuda sobre esta función</ui-text>
          <div class="button" id="ok"><ui-text w="37">Aceptar</ui-text></div>
          <div class="button"><ui-text w="41">Cancelar</ui-text></div>
        </div>
      `;
    }
  });

  customElements.define("argument-row", class extends HTMLElement {
    constructor() {
      super();

      const get = name => this.getAttribute(name);

      this.attachShadow({mode: "open"}).innerHTML = `
        <style>
          :host {
            display: flex;
            align-items: center;
            height: 21.6px;
          }

          #label {
            display: flex;
            justify-content: flex-end;
            width: 128px;
            margin-right: 8px;
          }

          #input {
            display: flex;
            align-items: center;
            box-sizing: border-box;
            width: 161px;
            height: 19px;
            background: #fff;
            border: 1px solid #a5a5a5;
          }

          #pick {
            display: flex;
            align-items: center;
            justify-content: center;
            box-sizing: border-box;
            width: 20px;
            height: 19px;
            margin-left: -1px;
            background: #dcdcdc;
            border: 1px solid ${this.hasAttribute("active") ? "#2a8ad4" : "#a5a5a5"};
          }
        </style>

        <div id="label"><ui-text w="${get("lw")}" bold>${get("label")}</ui-text></div>
        <div id="input"><ui-text gap="3" w="${get("vw")}">${get("value")}</ui-text></div>
        <div id="pick"><ui-icon name="refedit"></ui-icon></div>
        <ui-text gap="9.500" w="6">=</ui-text>
        <ui-text gap="9.500" w="${get("rw")}">${get("result")}</ui-text>
      `;
    }
  });

  // Inline svg from the icon table, sized to its own drawing.
  customElements.define("ui-icon", class extends HTMLElement {
    constructor() {
      super();

      const [width, height, markup] = icons[this.getAttribute("name")];

      this.attachShadow({mode: "open"}).innerHTML = `
        <style>
          :host {
            display: block;
            flex: none;
            margin-left: ${this.getAttribute("gap") || 0}px;
          }

          svg {
            display: block;
            overflow: visible;
          }
        </style>

        <svg width="${width}" height="${height}">${markup}</svg>
      `;
    }
  });

  // One line of text, tracked so that it fills the width given in "w".
  customElements.define("ui-text", class extends HTMLElement {
    constructor() {
      super();

      this.attachShadow({mode: "open"}).innerHTML = `
        <style>
          :host {
            display: block;
            flex: none;
            width: ${this.getAttribute("w")}px;
            margin-left: ${this.getAttribute("gap") || 0}px;
            white-space: nowrap;
            -webkit-text-stroke: .2px currentColor;
          }

          :host([semi]) {
            font-weight: 600;
          }

          :host([bold]) {
            font-weight: bold;
            -webkit-text-stroke: 0;
          }

          span {
            display: inline-block;
            text-decoration: inherit;
          }
        </style>

        <span><slot></slot></span>
      `;

      this.spanElem = this.shadowRoot.querySelector("span");
    }

    connectedCallback () {
      const natural = this.spanElem.getBoundingClientRect().width;
      const spacing = (Number(this.getAttribute("w")) - natural) / this.textContent.length;
      this.spanElem.style.letterSpacing = spacing + "px";
    }
  });
})();
</script>
</body>
</html>
